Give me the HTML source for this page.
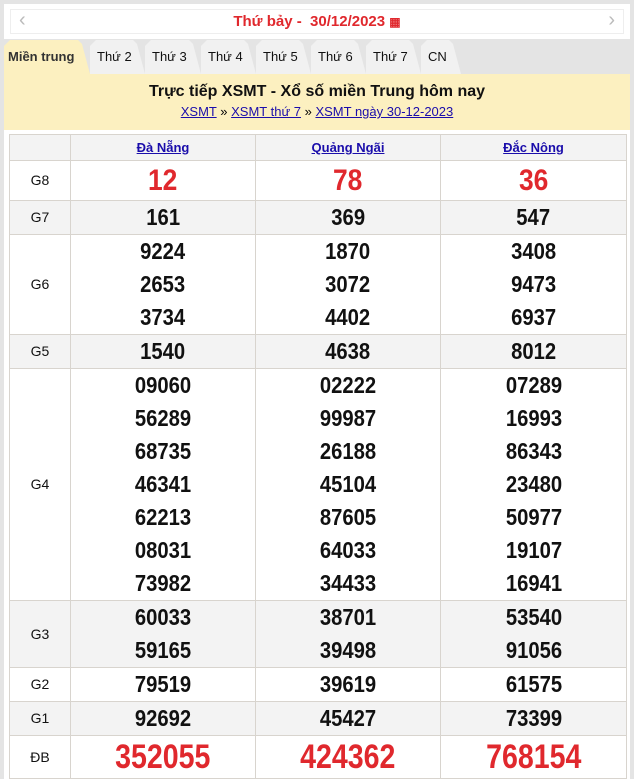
<!DOCTYPE html>
<html><head><meta charset="utf-8"><style>
*{margin:0;padding:0;box-sizing:border-box}
body{width:634px;height:779px;background:#e4e4e4;font-family:"Liberation Sans",Arial,sans-serif;overflow:hidden;position:relative}
.hdr{position:absolute;left:4px;top:4px;width:626px;height:35px;background:#fff;}
.hdr .in{position:absolute;left:6px;top:5px;right:6px;bottom:5px;border:1px solid #eee;text-align:center;line-height:23px;color:#e0282d;font-weight:bold;font-size:15px}
.arr{position:absolute;top:-1px;color:#bbb;font-size:20px;font-weight:normal}
.tab{position:absolute;top:40px;height:34px;background:#f1f1f1;font-size:13px;line-height:20px;padding:7px 0 0 7px;color:#111;clip-path:polygon(0 6px,6px 0,calc(100% - 12px) 0,calc(100% - 8px) 4px,100% 100%,0 100%)}
.tab.act{background:#fcf0c0;font-weight:bold;color:#333;padding-left:4px}
.band{position:absolute;left:4px;top:74px;width:626px;height:56px;background:#fcf0c0;text-align:center}
.band h1{font-size:16px;font-weight:bold;margin-top:9px;color:#111}
.band p{font-size:13px;margin-top:3px}
.band a{color:#1a0dab;text-decoration:underline}
.wrap{position:absolute;left:4px;top:130px;width:626px;height:649px;background:#fff}
table{position:absolute;left:5px;top:4px;border-collapse:collapse;width:618px}
td{border:1px solid #d8d4ce;text-align:center;font-weight:bold;font-size:23px;line-height:33px;color:#111}
td>b{display:inline-block;transform:scaleX(.88)}
td.l{font-weight:normal;font-size:14px;width:61px}
tr.g td{background:#f3f3f3}
tr.h td{font-size:13px;line-height:25px;background:#f3f3f3}
tr.h a{color:#1a0dab;text-decoration:underline}
.r8{color:#e0282d;font-size:30px;line-height:39px}
.db{color:#e0282d;font-size:34px;line-height:42px}
.db>b{transform:scaleX(.84)}
</style></head><body>
<div class="hdr"><div class="in"><span class="arr" style="left:8px">‹</span>Thứ bảy -&nbsp; 30/12/2023 <span style="font-size:12px">▦</span><span class="arr" style="right:8px">›</span></div></div>
<div class="tab act" style="left:4px;width:86px">Miền trung</div>
<div class="tab" style="left:90px;width:55px">Thứ 2</div>
<div class="tab" style="left:145px;width:56px">Thứ 3</div>
<div class="tab" style="left:201px;width:55px">Thứ 4</div>
<div class="tab" style="left:256px;width:55px">Thứ 5</div>
<div class="tab" style="left:311px;width:55px">Thứ 6</div>
<div class="tab" style="left:366px;width:55px">Thứ 7</div>
<div class="tab" style="left:421px;width:40px">CN</div>
<div class="band"><h1>Trực tiếp XSMT - Xổ số miền Trung hôm nay</h1><p><a>XSMT</a> » <a>XSMT thứ 7</a> » <a>XSMT ngày 30-12-2023</a></p></div>
<div class="wrap">
<table>
<tr class="h"><td class="l"></td><td style="width:185px"><a>Đà Nẵng</a></td><td style="width:185px"><a>Quảng Ngãi</a></td><td><a>Đắc Nông</a></td></tr>
<tr><td class="l">G8</td><td class="r8"><b>12</b></td><td class="r8"><b>78</b></td><td class="r8"><b>36</b></td></tr>
<tr class="g"><td class="l">G7</td><td><b>161</b></td><td><b>369</b></td><td><b>547</b></td></tr>
<tr><td class="l">G6</td><td><b>9224<br>2653<br>3734</b></td><td><b>1870<br>3072<br>4402</b></td><td><b>3408<br>9473<br>6937</b></td></tr>
<tr class="g"><td class="l">G5</td><td><b>1540</b></td><td><b>4638</b></td><td><b>8012</b></td></tr>
<tr><td class="l">G4</td><td><b>09060<br>56289<br>68735<br>46341<br>62213<br>08031<br>73982</b></td><td><b>02222<br>99987<br>26188<br>45104<br>87605<br>64033<br>34433</b></td><td><b>07289<br>16993<br>86343<br>23480<br>50977<br>19107<br>16941</b></td></tr>
<tr class="g"><td class="l">G3</td><td><b>60033<br>59165</b></td><td><b>38701<br>39498</b></td><td><b>53540<br>91056</b></td></tr>
<tr><td class="l">G2</td><td><b>79519</b></td><td><b>39619</b></td><td><b>61575</b></td></tr>
<tr class="g"><td class="l">G1</td><td><b>92692</b></td><td><b>45427</b></td><td><b>73399</b></td></tr>
<tr><td class="l">ĐB</td><td class="db"><b>352055</b></td><td class="db"><b>424362</b></td><td class="db"><b>768154</b></td></tr>
</table></div>
</body></html>
